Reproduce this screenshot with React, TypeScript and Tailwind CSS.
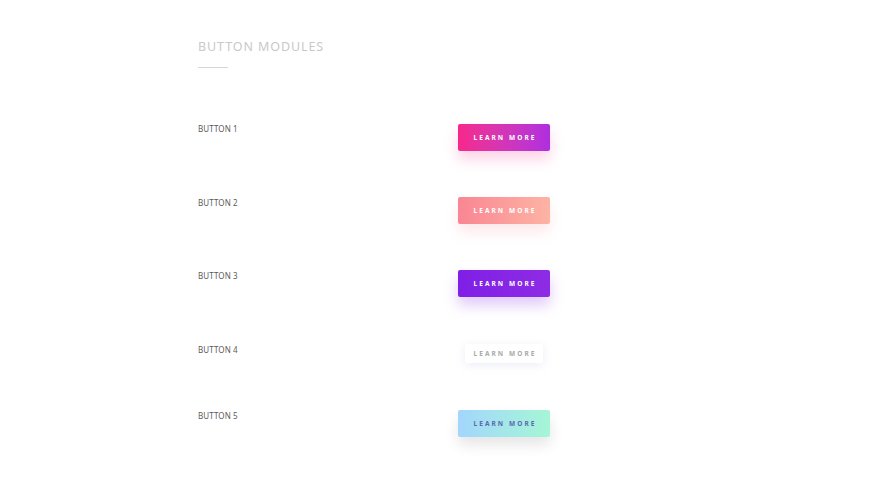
import React from "react";

const font = { fontFamily: '"Noto Sans", "DejaVu Sans", sans-serif' };

type Row = {
  label: string;
  rowH: string;
  btnMt: string;
  btn: string;
};

const rows: Row[] = [
  {
    label: "BUTTON 1",
    rowH: "h-[74px]",
    btnMt: "mt-[2px]",
    btn: "w-[92px] h-[27px] bg-gradient-to-r from-[#f7268a] to-[#b02de0] text-white shadow-[0_8px_14px_rgba(245,45,140,0.22)]",
  },
  {
    label: "BUTTON 2",
    rowH: "h-[73px]",
    btnMt: "mt-[1px]",
    btn: "w-[92px] h-[27px] bg-gradient-to-r from-[#f98693] to-[#fdb3a4] text-white shadow-[0_8px_14px_rgba(250,140,150,0.2)]",
  },
  {
    label: "BUTTON 3",
    rowH: "h-[74px]",
    btnMt: "mt-[1px]",
    btn: "w-[92px] h-[27px] bg-gradient-to-r from-[#7f1fe6] to-[#8e2be4] text-white shadow-[0_8px_14px_rgba(130,40,230,0.25)]",
  },
  {
    label: "BUTTON 4",
    rowH: "h-[66px]",
    btnMt: "mt-[1px]",
    btn: "w-[78px] h-[19px] bg-white text-[#a9a9a9] shadow-[0_2px_10px_rgba(120,130,200,0.14)]",
  },
  {
    label: "BUTTON 5",
    rowH: "h-[74px]",
    btnMt: "mt-[1px]",
    btn: "w-[92px] h-[27px] bg-gradient-to-r from-[#a3d6fc] to-[#a5f6d5] text-[#5c68ad] shadow-[0_8px_14px_rgba(0,0,0,0.1)]",
  },
];

const App = () => {
  return (
    <div className="w-full h-[495px] bg-white pl-[198px] pt-[39px]" style={font}>
      <h2 className="text-[12.5px] leading-4 tracking-[0.9px] text-[#c9c9c9] font-normal">
        BUTTON MODULES
      </h2>
      <hr className="mt-[12px] w-[30px] border-t border-[#d6d6d6]" />
      <div className="mt-[54px] flex flex-col">
        {rows.map((r) => (
          <div key={r.label} className={`flex items-start ${r.rowH}`}>
            <div className="w-[260px] mt-[1px] text-[8px] leading-3 text-[#5a5a5a] tracking-[0.1px]">
              {r.label}
            </div>
            <div className={`w-[92px] flex justify-center ${r.btnMt}`}>
              <button
                className={`${r.btn} rounded-[2px] flex items-center justify-center text-[6.5px] font-bold tracking-[2.1px] pl-[2px]`}
              >
                LEARN MORE
              </button>
            </div>
          </div>
        ))}
      </div>
    </div>
  );
};

export default App;
